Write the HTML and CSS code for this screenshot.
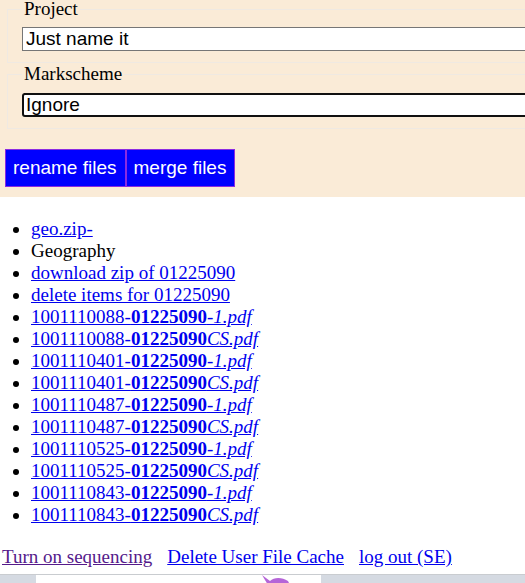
FILE: index.html
```html
<!DOCTYPE html>
<html>
<head>
<meta charset="utf-8">
<link rel="stylesheet" href="styles.css">
</head>
<body>
<div class="top">
  <fieldset class="group group-first">
    <legend class="group-title">Project</legend>
    <input class="field" type="text" value="Just name it">
  </fieldset>
  <fieldset class="group">
    <legend class="group-title">Markscheme</legend>
    <input class="field field-focus" type="text" value="Ignore">
  </fieldset>
  <div class="actions">
    <button class="btn">rename files</button><button class="btn">merge files</button>
  </div>
</div>
<ul class="files">
  <li><a href="#">geo.zip-</a></li>
  <li>Geography</li>
  <li><a href="#">download zip of 01225090</a></li>
  <li><a href="#">delete items for 01225090</a></li>
  <li><a href="#">1001110088-<b>01225090</b><i>-1.pdf</i></a></li>
  <li><a href="#">1001110088-<b>01225090</b><i>CS.pdf</i></a></li>
  <li><a href="#">1001110401-<b>01225090</b><i>-1.pdf</i></a></li>
  <li><a href="#">1001110401-<b>01225090</b><i>CS.pdf</i></a></li>
  <li><a href="#">1001110487-<b>01225090</b><i>-1.pdf</i></a></li>
  <li><a href="#">1001110487-<b>01225090</b><i>CS.pdf</i></a></li>
  <li><a href="#">1001110525-<b>01225090</b><i>-1.pdf</i></a></li>
  <li><a href="#">1001110525-<b>01225090</b><i>CS.pdf</i></a></li>
  <li><a href="#">1001110843-<b>01225090</b><i>-1.pdf</i></a></li>
  <li><a href="#">1001110843-<b>01225090</b><i>CS.pdf</i></a></li>
</ul>
<div class="footer">
  <a class="visited" href="#">Turn on sequencing</a>
  <a href="#">Delete User File Cache</a>
  <a href="#">log out (SE)</a>
</div>
<div class="strip">
  <div class="strip-box">
    <svg class="blob" width="40" height="10" viewBox="0 0 40 10"><path d="M2 0 L10 6 C14 2 22 2 28 6 L30 10 L8 10 Z" fill="#b565d8"/></svg>
  </div>
  <div class="strip-rest">
    <svg class="dot" width="20" height="10" viewBox="0 0 20 10"><path d="M2 10 C4 6 14 6 16 10 Z" fill="#3cc6de"/></svg>
  </div>
</div>
</body>
</html>
```

FILE: styles.css
```css
html, body {
  overflow-x: hidden;
}
body {
  margin: 0;
  font-family: "Liberation Serif", "Times New Roman", serif;
  font-size: 19px;
  line-height: 22px;
  color: #000;
  background: #fff;
}
.top {
  background: #faebd7;
  padding: 0 0 10px 0;
  width: 600px;
}
.group {
  margin: 0 0 0 7px;
  padding: 5px 14px 11px 14px;
  border: 1px solid #efe9e2;
  width: 560px;
  box-sizing: border-box;
}
.group-first {
  margin-top: -2px;
  padding-top: 7px;
}
.group-title {
  padding: 0 2px;
  line-height: 22px;
}
.field {
  display: block;
  width: 540px;
  margin: 0;
  box-sizing: border-box;
  height: 24px;
  padding: 0 3px;
  border: 1px solid #767676;
  font-family: "Liberation Sans", Arial, sans-serif;
  font-size: 19px;
  line-height: 22px;
  color: #000;
  background: #fff;
}
.field-focus {
  margin-top: 3px;
  border: 2px solid #101010;
  border-radius: 3px;
  padding: 0 2px;
}
.actions {
  display: flex;
  margin: 20px 0 0 5px;
}
.btn {
  font-family: "Liberation Sans", Arial, sans-serif;
  font-size: 19px;
  line-height: 22px;
  padding: 7px 8px 7px 7px;
  background: #0000ff;
  color: #fff;
  border: 1px solid #8a2be2;
  margin: 0;
}
.files {
  margin: 21px 0 0 0;
  padding-left: 31px;
}
.files a {
  color: #0000ee;
}
.footer {
  display: flex;
  gap: 15px;
  margin-top: 20px;
  padding-left: 2px;
}
.footer a {
  color: #0000ee;
}
.footer a.visited {
  color: #551a8b;
}
.strip {
  margin-top: 6px;
  display: flex;
  border-top: 1px solid #c9ccd0;
  background: #d5dae2;
  height: 20px;
  padding-left: 36px;
}
.strip-box {
  width: 285px;
  background: #fff;
  position: relative;
}
.blob {
  position: absolute;
  left: 224px;
  top: 0;
}
.strip-rest {
  flex: 1;
  position: relative;
}
.dot {
  position: absolute;
  left: 108px;
  top: 5px;
}
```
